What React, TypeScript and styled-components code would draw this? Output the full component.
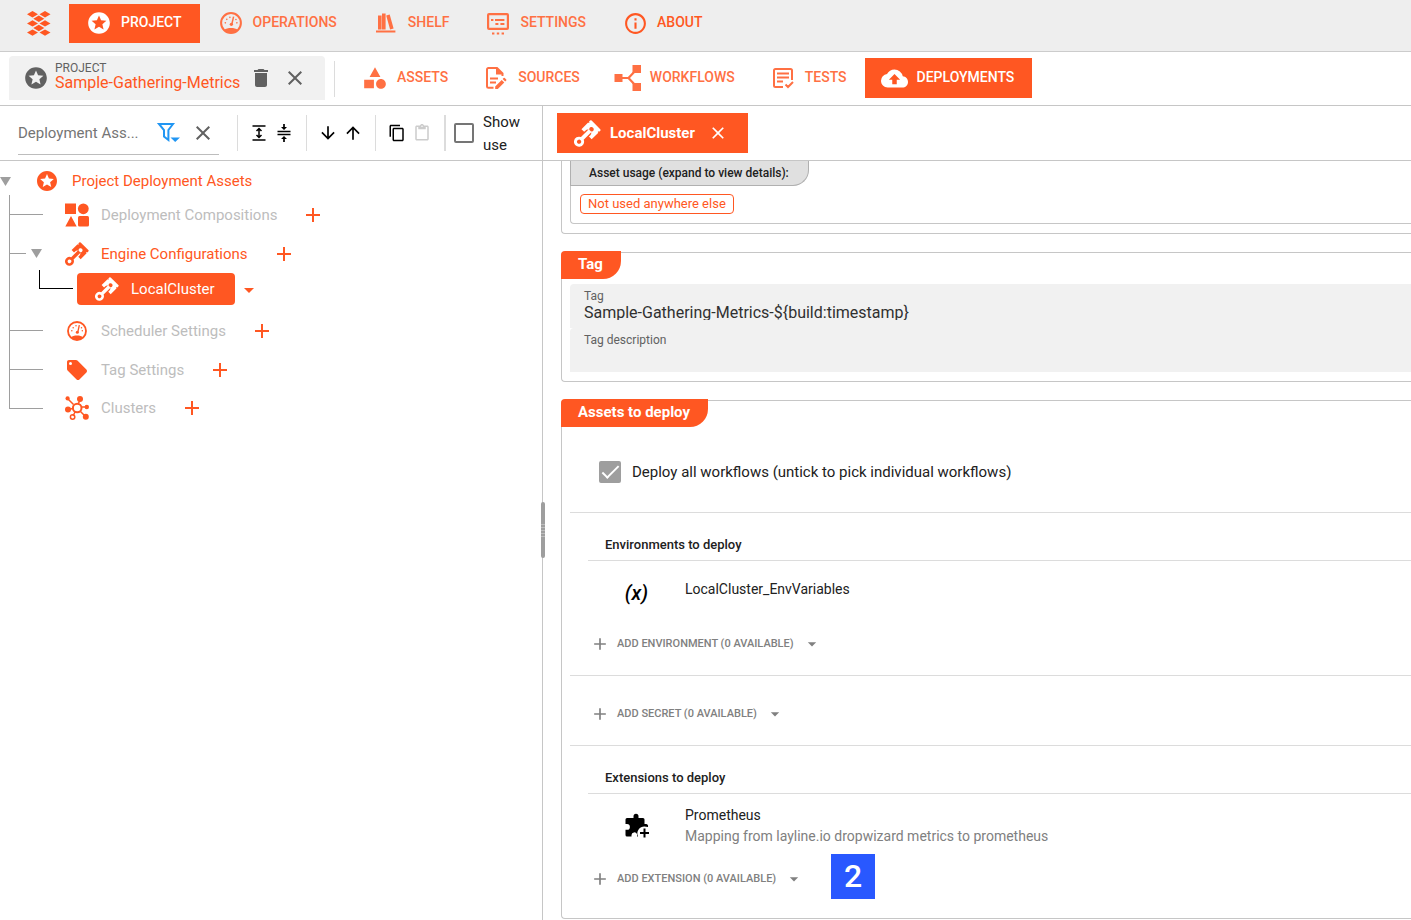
import React from 'react';
import styled, { createGlobalStyle } from 'styled-components';
import {
  MdAdd,
  MdArrowDropDown,
  MdArrowDownward,
  MdArrowUpward,
  MdBackup,
  MdClose,
  MdContentCopy,
  MdContentPaste,
  MdDelete,
  MdInfoOutline,
  MdStars,
} from 'react-icons/md';

const orange = '#ff5722';
const line = '#c6c6c6';

const GlobalStyle = createGlobalStyle`
  *, *::before, *::after { box-sizing: border-box; }
  body { margin: 0; background: #fff; color: #212121; font: 15px/20px Roboto, "Liberation Sans", sans-serif; }
  button, input { font: inherit; color: inherit; }
  button { margin: 0; padding: 0; border: 0; background: none; cursor: pointer; }
  svg { display: block; flex: none; }
  ul { list-style: none; margin: 0; padding: 0; }
  h2, h3, p { margin: 0; }
`;

/* ---------- icons ---------- */

type IconProps = { size?: number };

const Logo = () => (
  <svg width="24" height="25" viewBox="0 0 24 25" fill={orange} aria-hidden="true">
    {[
      [5.5, 3.2], [18, 3.2], [11.8, 7.8], [5.5, 12.4], [18, 12.4], [11.8, 17], [5.5, 21.6], [18, 21.6],
    ].map(([x, y]) => (
      <path key={`${x}-${y}`} d={`M${x} ${y - 3.2}l5.500 3.200l-5.500 3.200l-5.500 -3.200z`} />
    ))}
  </svg>
);

const Gauge = ({ size = 24 }: IconProps) => (
  <svg width={size} height={size} viewBox="0 0 24 24" aria-hidden="true">
    <circle cx="12" cy="12" r="10.8" fill="none" stroke="currentColor" strokeWidth="2.2" />
    <path d="M4.500 19.500C8 16.800 16 16.800 19.500 19.500C15.500 24 8.500 24 4.500 19.500z" fill="currentColor" />
    <path d="M14.800 5L13 13" stroke="currentColor" strokeWidth="1.600" />
    <circle cx="12.400" cy="13.400" r="1.800" fill="currentColor" />
    <g fill="currentColor">
      <circle cx="5.800" cy="11.800" r=".9" /><circle cx="7.400" cy="8" r=".9" />
      <circle cx="10.800" cy="5.800" r=".9" /><circle cx="17.400" cy="8.200" r=".9" />
      <circle cx="18.400" cy="11.800" r=".9" />
    </g>
  </svg>
);

const Shelf = () => (
  <svg width="22" height="22" viewBox="0 0 22 22" fill="currentColor" aria-hidden="true">
    <path d="M1 18.6h19.4v2H1zM3 3.500h3.600v14H3zM7 1.500h3.600v16H7zM11.2 3.400l3.500-.8 3.900 14-3.500.9z" />
  </svg>
);

const SettingsBoard = () => (
  <svg width="24" height="24" viewBox="0 0 24 24" fill="currentColor" aria-hidden="true">
    <path fillRule="evenodd" d="M3 2h18a2 2 0 0 1 2 2v13a2 2 0 0 1-2 2H3a2 2 0 0 1-2-2V4a2 2 0 0 1 2-2zM3.200 4.200v12.600h17.600V4.200zM5 8h2.400v2H5zM9 8h9.400v2H9zM9.400 12h3v2h-3zM14.400 12h4v2h-4z" />
    <path d="M6 21.500h2.400v2H6zM10.800 21.500h2.400v2h-2.400zM15.600 21.500h2.400v2h-2.400z" />
  </svg>
);

const Shapes = () => (
  <svg width="26" height="26" viewBox="0 0 24 24" fill="currentColor" aria-hidden="true">
    <path d="M11,13.500V21.500H2V13.500H11M12,2L17,11H7L12,2M17.500,13C20,13 22,15 22,17.500C22,20 20,22 17.500,22C15,22 13,20 13,17.500C13,15 15,13 17.500,13Z" />
  </svg>
);

const FileEdit = () => (
  <svg width="22" height="24" viewBox="0 0 22 24" aria-hidden="true">
    <path d="M8.500 21.800H3.400A1.400 1.400 0 0 1 2 20.400V3.400A1.400 1.400 0 0 1 3.400 2H12l5.500 5.500V10" fill="none" stroke="currentColor" strokeWidth="2" />
    <path d="M11 1.500V8.500H18zM5 11.600h8v2H5zM5 15.600h6v2H5z" fill="currentColor" />
    <path d="M10.200 23v-2.600l6.500-6.500 2.600 2.600-6.500 6.500zM17.600 13l1-1a.8.8 0 0 1 1.200 0l1.400 1.400a.8.8 0 0 1 0 1.200l-1 1z" fill="currentColor" />
  </svg>
);

const Workflow = () => (
  <svg width="28" height="28" viewBox="0 0 28 28" aria-hidden="true">
    <path d="M8 14h7M23 5l-8.500 9 8.500 9" fill="none" stroke="currentColor" strokeWidth="2.200" />
    <path d="M.500 10h8v8h-8zM18.500 1H27v8h-8.500zM18.500 19H27v8h-8.500z" fill="currentColor" />
  </svg>
);

const TestList = () => (
  <svg width="22" height="22" viewBox="0 0 22 22" fill="none" stroke="currentColor" strokeWidth="2" aria-hidden="true">
    <path d="M11 20H3.500A1.500 1.500 0 0 1 2 18.500v-15A1.500 1.500 0 0 1 3.500 2h15A1.500 1.500 0 0 1 20 3.500V13M5 6.500h12M5 10.500h12M5 14.500h6M13.500 17.500l2.500 2.500 5-5" />
  </svg>
);

const Piston = ({ size = 24 }: IconProps) => (
  <svg width={size} height={size} viewBox="0 0 24 24" fill="currentColor" aria-hidden="true">
    <g transform="translate(15.400 8.400) rotate(45)">
      <path
        fillRule="evenodd"
        d="M-5.400 -5.800H5.400A1 1 0 0 1 6.400 -4.800V-3.400H5.600V-2.400H6.400V6H3V4.500A3 3 0 0 0 -3 4.500V6H-6.400V-2.400H-5.600V-3.400H-6.400V-4.800A1 1 0 0 1 -5.400 -5.800zM0 -2.200a2 2 0 1 0 .01 0z"
      />
      <path
        fillRule="evenodd"
        d="M-1.700 1.500H1.700V11.300A4.500 4.500 0 1 1 -1.700 11.300zM0 13.500a1.900 1.900 0 1 0 .01 0z"
      />
    </g>
  </svg>
);

const Blocks = () => (
  <svg width="24" height="24" viewBox="0 0 24 24" fill="currentColor" aria-hidden="true">
    <path d="M0 .500h11v10.500H0zM6 13l5.700 10.500H.3z" />
    <circle cx="18.300" cy="5.800" r="5.400" />
    <rect x="13" y="13" width="11" height="10.500" rx="1.500" />
  </svg>
);

const Tag = () => (
  <svg width="24" height="24" viewBox="0 0 24 24" fill="currentColor" aria-hidden="true">
    <path d="M5.500,7A1.500,1.500 0 0,1 4,5.500A1.500,1.500 0 0,1 5.500,4A1.500,1.500 0 0,1 7,5.500A1.500,1.500 0 0,1 5.500,7M21.410,11.580L12.410,2.580C12.050,2.220 11.550,2 11,2H4C2.890,2 2,2.890 2,4V11C2,11.550 2.220,12.050 2.590,12.410L11.580,21.410C11.950,21.770 12.450,22 13,22C13.550,22 14.050,21.770 14.410,21.410L21.410,14.410C21.780,14.050 22,13.550 22,13C22,12.440 21.770,11.940 21.410,11.580Z" />
  </svg>
);

const Cluster = () => (
  <svg width="24" height="24" viewBox="0 0 24 24" aria-hidden="true">
    <g fill="none" stroke="currentColor" strokeWidth="1.500">
      <path d="M2.500 2.500l6 6M15 3.500l-1.500 4M22 11h-5M3 13.500l5-1M8 20l2-4M20.500 20.500l-5-5" />
      <circle cx="12.200" cy="12" r="4.300" strokeWidth="2" />
      <circle cx="7.600" cy="21" r="2.200" />
    </g>
    <g fill="currentColor">
      <circle cx="2.600" cy="2.400" r="2.100" /><circle cx="15" cy="3" r="3" />
      <circle cx="21.800" cy="11" r="2.200" /><circle cx="3" cy="13.500" r="3" />
      <circle cx="20.800" cy="20.800" r="3" />
    </g>
  </svg>
);

const FilterMenu = () => (
  <svg width="24" height="24" viewBox="0 0 24 24" fill="none" stroke="#2196f3" strokeWidth="2" aria-hidden="true">
    <path d="M3 3h14l-4.600 6v10L8 15.500V9z" />
    <path d="M14.500 16.500h9.500L19.200 21z" fill="#2196f3" stroke="none" />
  </svg>
);

const ExpandRows = () => (
  <svg width="16" height="16" viewBox="0 0 16 16" fill="none" stroke="#000" strokeWidth="1.500" aria-hidden="true">
    <path d="M1.500 1h13M1.500 15h13M8 3.500v9M5.500 6L8 3.500 10.500 6M5.500 10L8 12.500l2.500-2.500" />
  </svg>
);

const CollapseRows = () => (
  <svg width="16" height="18" viewBox="0 0 16 18" aria-hidden="true">
    <path d="M1.500 7.500h13M1.500 10.500h13M8 0v5M8 13v5" fill="none" stroke="#000" strokeWidth="1.700" />
    <path d="M5 3h6L8 6zM5 15h6L8 12z" />
  </svg>
);

const PuzzlePlus = () => (
  <svg width="26" height="26" viewBox="0 0 26 26" aria-hidden="true">
    <path d="M19 5h-4.500V3.200a2.400 2.400 0 0 0-5 0V5H3a1.500 1.500 0 0 0-1.500 1.500V11H3a2.900 2.900 0 0 1 0 5.800H1.500V22A1.500 1.500 0 0 0 3 23.500h4.500V22a2.900 2.900 0 0 1 5.500-1v2.500h1A7 7 0 0 1 20.500 13.500L24 14a2.500 2.500 0 0 0-2-3H20.500V6.500A1.500 1.500 0 0 0 19 5z" />
    <path d="M20.500 15.500v9M16 20h9" stroke="#000" strokeWidth="2" />
  </svg>
);

/* ---------- frame ---------- */

const Page = styled.div`
  display: flex;
  flex-direction: column;
  min-height: 100vh;
`;

const TopBar = styled.header`
  display: flex;
  align-items: center;
  height: 52px;
  padding: 0 0 5px 27px;
  background: #eee;
  border-bottom: 1px solid #ccc;
`;

const LogoLink = styled.a`
  margin-right: 18px;
`;

const Nav = styled.nav`
  display: flex;
`;

const MainNav = styled(Nav)`
  gap: 1px;
`;

const NavButton = styled.button<{ $active?: boolean; $solid?: boolean }>`
  display: flex;
  align-items: center;
  gap: 8px;
  height: ${p => (p.$solid ? 39 : 40)}px;
  padding: 0 18px 0 16px;
  font-size: 14px;
  font-weight: 500;
  color: ${p => (p.$active ? '#fff' : '#ff7043')};
  background: ${p => (p.$active ? orange : 'transparent')};
  white-space: nowrap;
  &:last-child:not(:only-child) { color: ${p => (p.$active ? '#fff' : orange)}; }
`;

const NavLabel = styled.span`
  padding-bottom: 2px;
`;

const NavIcon = styled.span`
  display: flex;
  justify-content: center;
  width: 28px;
`;

const ProjectBar = styled.div`
  display: flex;
  align-items: center;
  height: 54px;
  padding-left: 9px;
  border-bottom: 1px solid ${line};
`;

const ProjectChip = styled.div`
  display: flex;
  align-items: center;
  gap: 10px;
  width: 316px;
  height: 44px;
  margin: 0 9px 2px 0;
  padding-left: 14px;
  background: #f1f1f1;
  border-radius: 4px 4px 0 0;
  color: #616161;
`;

const ChipText = styled.div`
  display: flex;
  flex-direction: column;
  margin: -3px -1px 0 -4px;
`;

const ChipCaption = styled.span`
  font-size: 12px;
  line-height: 14px;
`;

const ChipName = styled.span`
  font-size: 16px;
  line-height: 16px;
  color: ${orange};
`;

const IconButton = styled.button`
  display: flex;
  align-items: center;
  justify-content: center;
  min-width: 24px;
  height: 24px;
`;

const BarDivider = styled.span<{ $wide?: boolean }>`
  flex: none;
  width: ${p => (p.$wide ? 2 : 1)}px;
  height: 36px;
  background: #dcdcdc;
`;

const SubNav = styled(Nav)`
  margin: -1px 0 0 10px;
`;

const Body = styled.div`
  display: flex;
  flex: 1;
`;

/* ---------- left side ---------- */

const Side = styled.aside`
  position: relative;
  flex: 0 0 543px;
  border-right: 1px solid ${line};
`;

const Splitter = styled.div`
  position: absolute;
  top: 396px;
  right: -3px;
  display: flex;
  align-items: center;
  width: 4px;
  height: 56px;
  border-radius: 2px;
  background: #9e9e9e;
`;

const Grip = styled.span`
  width: 4px;
  height: 13px;
  background: repeating-linear-gradient(#bdbdbd 0 1px, #9e9e9e 1px 3px);
`;

const SideTools = styled.div`
  display: flex;
  align-items: center;
  height: 55px;
  padding-left: 18px;
  border-bottom: 1px solid ${line};
`;

const FilterBox = styled.div`
  display: flex;
  align-items: center;
  gap: 11px;
  width: 201px;
  height: 43px;
  margin-right: 18px;
  padding-right: 4px;
  border-bottom: 1px solid #bdbdbd;
  color: #616161;
`;

const FilterInput = styled.input`
  flex: 1;
  min-width: 0;
  margin-right: -11px;
  padding: 0;
  border: 0;
  outline: 0;
  background: none;
  &::placeholder { color: #757575; opacity: 1; }
`;

const ToolGroup = styled.div`
  display: flex;
  align-items: center;
  justify-content: center;
  gap: 1px;
  width: 68px;
  padding-right: 1px;
  color: #000;
  button:disabled { color: #ccc; }
`;

const CheckLabel = styled.label<{ $narrow?: boolean }>`
  display: flex;
  align-items: center;
  gap: ${p => (p.$narrow ? 9 : 11)}px;
  width: ${p => (p.$narrow ? '80px' : 'auto')};
  margin-left: ${p => (p.$narrow ? 8 : 0)}px;
  line-height: 23px;
`;

const CheckText = styled.span`
  padding-top: 2px;
`;

const TickBox = styled.input<{ $size: number }>`
  appearance: none;
  flex: none;
  display: grid;
  place-content: center;
  width: ${p => p.$size}px;
  height: ${p => p.$size}px;
  margin: 0;
  border: 2px solid #757575;
  border-radius: 2px;
  &:checked { border-color: #9e9e9e; background: #9e9e9e; }
  &:checked::after {
    content: '';
    width: 17px;
    height: 8px;
    border: solid #fff;
    border-width: 0 0 2px 2px;
    transform: translateY(-2px) rotate(-45deg);
  }
`;

const RootRow = styled.div`
  display: flex;
  align-items: center;
  height: 34px;
  padding-top: 6px;
  color: ${orange};
`;

const RootIcon = styled.span`
  margin: 0 13px 0 24px;
`;

const Row = styled.div<{ $short?: boolean }>`
  display: flex;
  align-items: center;
  height: ${p => (p.$short ? 38 : 39)}px;
  margin-left: 9px;
`;

const Gutter = styled.span<{ $last?: boolean; $plain?: boolean; $narrow?: boolean }>`
  align-self: flex-start;
  width: ${p => (p.$plain ? 30 : p.$narrow ? 17 : 34)}px;
  height: ${p => (p.$last ? '20px' : '100%')};
  margin-right: ${p => (p.$narrow ? 5 : 0)}px;
  border-left: 1px solid #9e9e9e;
  &::before {
    content: '';
    display: ${p => (p.$plain ? 'none' : 'block')};
    height: 20px;
    border-bottom: 1px solid #9e9e9e;
  }
`;

const ChildElbow = styled.span`
  align-self: flex-start;
  width: 34px;
  height: 19px;
  margin: -3px 4px 0 0;
  border: solid #000;
  border-width: 0 0 1px 1px;
`;

const Twisty = styled.button`
  width: 11px;
  height: 9px;
  color: #9e9e9e;
`;

const NodeIcon = styled.span`
  display: flex;
  justify-content: center;
  width: 24px;
  margin: 0 12px 0 22px;
  color: ${orange};
  ${Twisty} + & { margin-left: 23px; }
`;

const NodeLabel = styled.span<{ $on?: boolean }>`
  margin-right: 24px;
  color: ${p => (p.$on ? orange : '#bdbdbd')};
`;

const AddButton = styled(IconButton)`
  color: ${orange};
`;

const Selected = styled.button`
  display: flex;
  align-items: center;
  gap: 12px;
  height: 32px;
  padding: 0 20px 0 18px;
  margin: 0 2px 6px 0;
  border-radius: 4px;
  background: ${orange};
  color: #fff;
`;

const CaretButton = styled(IconButton)`
  margin-bottom: 5px;
  color: ${orange};
`;

/* ---------- right side ---------- */

const Main = styled.main`
  flex: 1;
  min-width: 0;
`;

const TabStrip = styled.div`
  display: flex;
  align-items: center;
  height: 55px;
  padding-left: 14px;
  border-bottom: 1px solid ${line};
`;

const Tab = styled.div`
  display: flex;
  align-items: center;
  gap: 9px;
  height: 40px;
  padding: 0 18px 0 17px;
  background: ${orange};
  color: #fff;
  font-weight: 700;
`;

const TabClose = styled(IconButton)`
  margin-left: 2px;
`;

const Card = styled.section<{ $cut?: boolean }>`
  margin-left: 18px;
  margin-bottom: 18px;
  border: 1px solid ${line};
  border-right: 0;
  border-top-width: ${p => (p.$cut ? 0 : 1)}px;
  border-radius: ${p => (p.$cut ? '0 0 0 4px' : '4px 0 0 4px')};
  padding: 0 0 9px 8px;
  &:last-child { margin-bottom: 0; padding-bottom: 8px; }
`;

const CardTitle = styled.h2`
  width: fit-content;
  height: 28px;
  margin: -2px 0 0 -9px;
  padding: 0 18px 0 17px;
  border-radius: 4px 0 18px 0;
  background: ${orange};
  color: #fff;
  font-size: 15px;
  line-height: 27px;
  font-weight: 700;
`;

const Usage = styled.div`
  border: solid ${line};
  border-width: 0 0 1px 1px;
  border-radius: 0 0 0 4px;
  padding-bottom: 9px;
`;

const UsageHead = styled.button`
  display: block;
  height: 25px;
  margin-left: -1px;
  padding: 0 19px 0 18px;
  border: 1px solid #b0b0b0;
  border-top: 0;
  border-radius: 0 0 16px 0;
  background: #e0e0e0;
  font-size: 12px;
  font-weight: 500;
`;

const Chip = styled.span`
  display: block;
  width: fit-content;
  height: 20px;
  margin: 8px 0 0 9px;
  padding: 0 7px;
  border: 1px solid ${orange};
  border-radius: 4px;
  color: ${orange};
  font-size: 13px;
  line-height: 18px;
`;

const Fields = styled.div`
  margin-top: 5px;
`;

const Field = styled.label`
  display: block;
  height: 44px;
  padding: 4px 14px 0;
  border-radius: 4px 0 0 0;
  background: #f1f1f1;
  color: #616161;
  font-size: 12px;
  line-height: 16px;
`;

const FieldInput = styled.input`
  display: block;
  width: 100%;
  height: 16px;
  padding: 0;
  border: 0;
  outline: 0;
  background: none;
  color: #303030;
  font-size: 16px;
`;

const Section = styled.div<{ $pt: number; $pb: number }>`
  padding: ${p => p.$pt}px 0 ${p => p.$pb}px 18px;
  & + & { border-top: 1px solid #dcdcdc; }
`;

const SectionTitle = styled.h3`
  padding: 0 0 5px 17px;
  border-bottom: 1px solid #dcdcdc;
  font-size: 13px;
  line-height: 20px;
  font-weight: 500;
`;

const Item = styled.div`
  display: flex;
  align-items: center;
  height: 65px;
`;

const ItemIcon = styled.span`
  display: flex;
  justify-content: center;
  width: 97px;
  padding-bottom: 2px;
  color: #000;
  font-size: 20px;
  font-weight: 500;
  font-style: italic;
`;

const ItemText = styled.div<{ $single?: boolean }>`
  padding-bottom: ${p => (p.$single ? 10 : 2)}px;
  font-size: 14px;
`;

const ItemNote = styled.p`
  color: #808080;
  font-size: 14px;
  line-height: 22px;
`;

const AddItem = styled.button`
  display: flex;
  align-items: center;
  height: 36px;
  padding-left: 2px;
  color: #808080;
  font-size: 11px;
  font-weight: 500;
`;

const AddLabel = styled.span`
  margin: 0 8px 0 7px;
`;

const AddRow = styled.div`
  display: flex;
  align-items: center;
  padding-top: 2px;
`;

const CheckRow = styled.div`
  display: flex;
  padding-left: 11px;
`;

const Step = styled.span`
  display: flex;
  align-items: center;
  justify-content: center;
  width: 44px;
  height: 45px;
  margin: -7px 0 -2px 27px;
  padding-bottom: 2px;
  background: #2958ff;
  color: #fff;
  font-size: 32px;
  font-weight: 500;
`;

const Triangle = () => (
  <svg width="11" height="9" viewBox="0 0 11 9" fill="currentColor" aria-hidden="true">
    <path d="M0 0h11L5.500 9z" />
  </svg>
);

const AddMore = ({ label }: { label: string }) => (
  <AddItem>
    <MdAdd size={20} />
    <AddLabel>{label}</AddLabel>
    <MdArrowDropDown size={20} />
  </AddItem>
);

const topNav = [
  { label: 'PROJECT', icon: <MdStars size={26} />, active: true },
  { label: 'OPERATIONS', icon: <Gauge size={22} /> },
  { label: 'SHELF', icon: <Shelf /> },
  { label: 'SETTINGS', icon: <SettingsBoard /> },
  { label: 'ABOUT', icon: <MdInfoOutline size={25} /> },
];

const subNav = [
  { label: 'ASSETS', icon: <Shapes /> },
  { label: 'SOURCES', icon: <FileEdit /> },
  { label: 'WORKFLOWS', icon: <Workflow /> },
  { label: 'TESTS', icon: <TestList /> },
  { label: 'DEPLOYMENTS', icon: <MdBackup size={27} />, active: true },
];

const lowerNodes = [
  { label: 'Scheduler Settings', icon: <Gauge size={20} /> },
  { label: 'Tag Settings', icon: <Tag /> },
  { label: 'Clusters', icon: <Cluster /> },
];

export default function App() {
  return (
    <Page>
      <GlobalStyle />
      <TopBar>
        <LogoLink href="#" aria-label="Home"><Logo /></LogoLink>
        <MainNav>
          {topNav.map(n => (
            <NavButton key={n.label} $active={n.active} $solid>
              <NavIcon>{n.icon}</NavIcon>
              <NavLabel>{n.label}</NavLabel>
            </NavButton>
          ))}
        </MainNav>
      </TopBar>

      <ProjectBar>
        <ProjectChip>
          <MdStars size={26} />
          <ChipText>
            <ChipCaption>PROJECT</ChipCaption>
            <ChipName>Sample-Gathering-Metrics</ChipName>
          </ChipText>
          <IconButton aria-label="Delete project"><MdDelete size={24} /></IconButton>
          <IconButton aria-label="Close project"><MdClose size={24} /></IconButton>
        </ProjectChip>
        <BarDivider />
        <SubNav>
          {subNav.map(n => (
            <NavButton key={n.label} $active={n.active}>
              <NavIcon>{n.icon}</NavIcon>
              <NavLabel>{n.label}</NavLabel>
            </NavButton>
          ))}
        </SubNav>
      </ProjectBar>

      <Body>
        <Side>
          <SideTools>
            <FilterBox>
              <FilterInput aria-label="Filter assets" placeholder="Deployment Ass..." />
              <IconButton aria-label="Filter options"><FilterMenu /></IconButton>
              <IconButton aria-label="Clear filter"><MdClose size={24} /></IconButton>
            </FilterBox>
            <BarDivider />
            <ToolGroup>
              <IconButton aria-label="Expand all"><ExpandRows /></IconButton>
              <IconButton aria-label="Collapse all"><CollapseRows /></IconButton>
            </ToolGroup>
            <BarDivider />
            <ToolGroup>
              <IconButton aria-label="Move down"><MdArrowDownward size={20} /></IconButton>
              <IconButton aria-label="Move up"><MdArrowUpward size={20} /></IconButton>
            </ToolGroup>
            <BarDivider />
            <ToolGroup>
              <IconButton aria-label="Copy"><MdContentCopy size={18} /></IconButton>
              <IconButton aria-label="Paste" disabled><MdContentPaste size={18} /></IconButton>
            </ToolGroup>
            <BarDivider $wide />
            <CheckLabel $narrow>
              <TickBox type="checkbox" $size={20} />
              <CheckText>Show use</CheckText>
            </CheckLabel>
          </SideTools>

          <ul>
            <li>
              <RootRow>
                <Twisty aria-label="Toggle project"><Triangle /></Twisty>
                <RootIcon><MdStars size={24} /></RootIcon>
                Project Deployment Assets
              </RootRow>
              <ul>
                <li>
                  <Row>
                    <Gutter />
                    <NodeIcon><Blocks /></NodeIcon>
                    <NodeLabel>Deployment Compositions</NodeLabel>
                    <AddButton aria-label="Add composition"><MdAdd size={24} /></AddButton>
                  </Row>
                </li>
                <li>
                  <Row>
                    <Gutter $narrow />
                    <Twisty aria-label="Toggle engine configurations"><Triangle /></Twisty>
                    <NodeIcon><Piston /></NodeIcon>
                    <NodeLabel $on>Engine Configurations</NodeLabel>
                    <AddButton aria-label="Add engine configuration"><MdAdd size={24} /></AddButton>
                  </Row>
                  <ul>
                    <li>
                      <Row $short>
                        <Gutter $plain />
                        <ChildElbow />
                        <Selected><Piston />LocalCluster</Selected>
                        <CaretButton aria-label="LocalCluster menu"><MdArrowDropDown size={24} /></CaretButton>
                      </Row>
                    </li>
                  </ul>
                </li>
                {lowerNodes.map((n, i) => (
                  <li key={n.label}>
                    <Row $short={i === lowerNodes.length - 1}>
                      <Gutter $last={i === lowerNodes.length - 1} />
                      <NodeIcon>{n.icon}</NodeIcon>
                      <NodeLabel>{n.label}</NodeLabel>
                      <AddButton aria-label={`Add to ${n.label}`}><MdAdd size={24} /></AddButton>
                    </Row>
                  </li>
                ))}
              </ul>
            </li>
          </ul>
          <Splitter><Grip /></Splitter>
        </Side>

        <Main>
          <TabStrip>
            <Tab>
              <Piston size={27} />
              LocalCluster
              <TabClose aria-label="Close tab"><MdClose size={20} /></TabClose>
            </Tab>
          </TabStrip>

          <Card $cut>
            <Usage>
              <UsageHead>Asset usage (expand to view details):</UsageHead>
              <Chip>Not used anywhere else</Chip>
            </Usage>
          </Card>

          <Card>
            <CardTitle>Tag</CardTitle>
            <Fields>
              <Field>
                Tag
                <FieldInput defaultValue="Sample-Gathering-Metrics-${build:timestamp}" />
              </Field>
              <Field>
                Tag description
                <FieldInput />
              </Field>
            </Fields>
          </Card>

          <Card>
            <CardTitle>Assets to deploy</CardTitle>
            <Section $pt={32} $pb={28}>
              <CheckRow>
                <CheckLabel>
                  <TickBox type="checkbox" defaultChecked $size={22} />
                  <CheckText>Deploy all workflows (untick to pick individual workflows)</CheckText>
                </CheckLabel>
              </CheckRow>
            </Section>
            <Section $pt={22} $pb={13}>
              <SectionTitle>Environments to deploy</SectionTitle>
              <Item>
                <ItemIcon>(x)</ItemIcon>
                <ItemText $single>LocalCluster_EnvVariables</ItemText>
              </Item>
              <AddMore label="ADD ENVIRONMENT (0 AVAILABLE)" />
            </Section>
            <Section $pt={20} $pb={13}>
              <AddMore label="ADD SECRET (0 AVAILABLE)" />
            </Section>
            <Section $pt={22} $pb={13}>
              <SectionTitle>Extensions to deploy</SectionTitle>
              <Item>
                <ItemIcon><PuzzlePlus /></ItemIcon>
                <ItemText>
                  Prometheus
                  <ItemNote>Mapping from layline.io dropwizard metrics to prometheus</ItemNote>
                </ItemText>
              </Item>
              <AddRow>
                <AddMore label="ADD EXTENSION (0 AVAILABLE)" />
                <Step>2</Step>
              </AddRow>
            </Section>
          </Card>
        </Main>
      </Body>
    </Page>
  );
}
